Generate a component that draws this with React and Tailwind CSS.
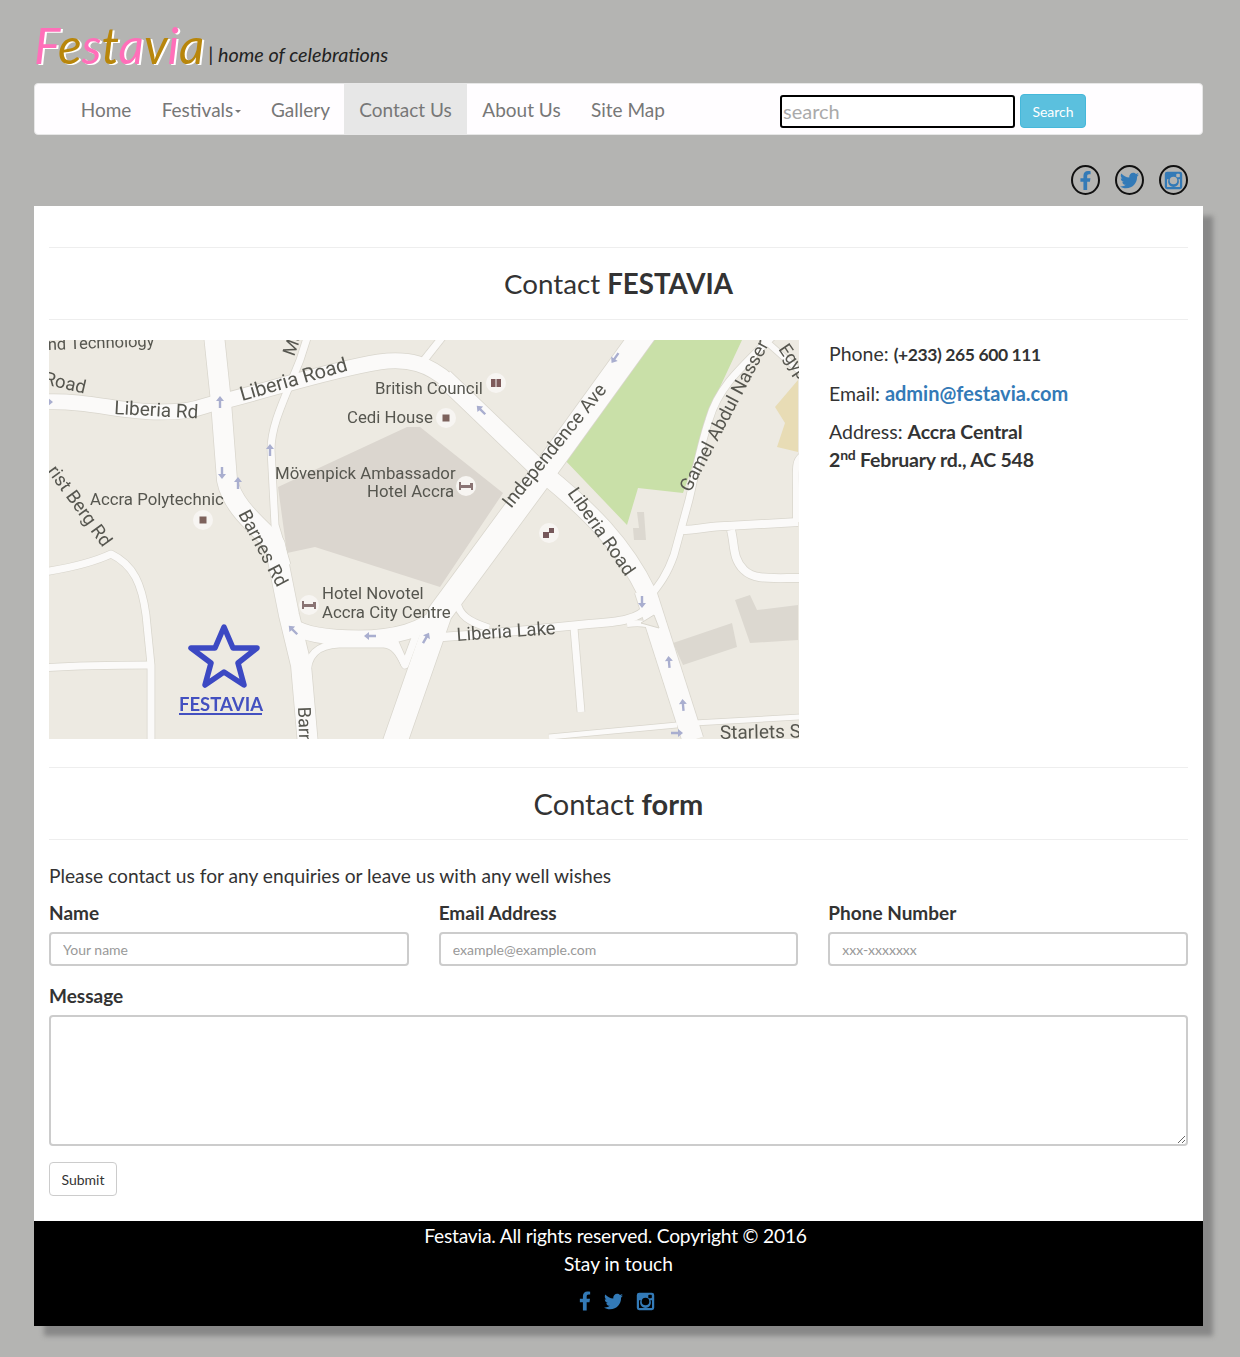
import React from 'react';
import { FaFacebookF, FaTwitter } from 'react-icons/fa';

function Insta({ className }) {
  return (
    <svg viewBox="0 0 24 24" className={className} fill="currentColor">
      <path fillRule="evenodd" d="M4 1h16a3 3 0 0 1 3 3v16a3 3 0 0 1-3 3H4a3 3 0 0 1-3-3V4a3 3 0 0 1 3-3Zm12.5 2.5a1 1 0 0 0-1 1v2.5a1 1 0 0 0 1 1H19a1 1 0 0 0 1-1V4.500a1 1 0 0 0-1-1h-2.500ZM12 7.200a4.800 4.800 0 1 0 0 9.600 4.800 4.800 0 0 0 0-9.600ZM3.800 10.500V19.500a.8.8 0 0 0 .8.8h14.800a.8.8 0 0 0 .8-.8v-9h-2a6.800 6.800 0 1 1-12.400 0h-2Z" />
    </svg>
  );
}

const roads = [
  ['M-5 62 C40 60 70 72 110 72 S150 66 171 62 C220 50 280 30 330 22 C360 18 380 24 400 42', 15],
  ['M395 38 L494 133 C540 170 575 205 598 253', 18],
  ['M596 250 L644 400', 21],
  ['M165 -5 L172 62 L178 140 C184 170 215 190 226 205 L240 275 L252 325 L259 405', 20],
  ['M596 -8 L494 133 L391 273 L345 405', 24],
  ['M259 -5 L251 20 C235 60 222 85 222 110 L226 185 L238 225', 7],
  ['M395 -5 L372 24', 7],
  ['M242 285 C255 295 280 298 310 298 C345 298 375 290 391 273', 15],
  ['M258 405 L258 335 C258 315 268 305 290 304 L335 304 C345 305 350 312 356 325', 7],
  ['M345 300 L356 325 L372 282', 7],
  ['M376 298 C420 296 480 290 540 284 C570 282 590 280 601 265', 8],
  ['M408 262 C410 275 420 282 440 288', 7],
  ['M578 284 C595 282 610 285 618 295', 6],
  ['M525 288 L532 372', 7],
  ['M725 -5 C695 25 670 45 660 80 C650 110 645 140 640 160 L625 215 C618 235 610 245 602 255', 7],
  ['M632 190 C650 190 665 185 678 186 L749 182', 8],
  ['M682 190 C686 205 683 218 695 230 C705 240 720 238 752 238', 8],
  ['M754 115 C745 120 747 130 747 150 L747 182', 6],
  ['M710 -5 L755 35', 6],
  ['M645 383 L752 377', 5],
  ['M628 385 L500 397', 5],
  ['M-5 232 C20 228 45 222 62 214 C85 225 93 245 97 275 L102 325 L102 405', 7],
  ['M-5 328 C30 325 70 325 102 325', 7],
];

const arrows = [
  [-2, 62, 90], [171, 62, 0], [173, 133, 180], [189, 143, 0], [221, 110, 0], [244, 290, -45],
  [321, 296, -90], [377, 298, 30], [566, 18, 215], [432, 70, -45], [593, 262, 180], [620, 322, -5],
  [634, 365, -5], [628, 393, 90],
];

const pois = [[447, 43, 'book'], [397, 78, 'sq'], [417, 146, 'bed'], [154, 180, 'sq'], [260, 265, 'bed'], [500, 193, 'two']];

const labels = [
  ['nd Technology', -1, 10, -2, 16.5],
  ['Road', -6, 44, 13, 18.5],
  ['Liberia Rd', 65, 74, 3, 19],
  ['Liberia Road', 193, 61, -16, 20],
  ['British Council', 326, 54, 0, 16.8],
  ['Cedi House', 298, 83, 0, 16.8],
  ['Mövenpick Ambassador', 226, 139, 0, 16.8],
  ['Hotel Accra', 318, 157, 0, 16.8],
  ['Accra Polytechnic', 41, 165, 0, 16.8],
  ['rist Berg Rd', -2, 131, 54, 18.5],
  ['Barnes Rd', 189, 174, 62, 18.5],
  ['Hotel Novotel', 273, 259, 0, 16.8],
  ['Accra City Centre', 273, 278, 0, 16.8],
  ['Liberia Lake', 408, 301, -4, 18.5],
  ['Independence Ave', 462, 169, -51, 18.8],
  ['Liberia Road', 518, 153, 55, 18.5],
  ['Gamel Abdul Nasser', 641, 153, -62, 18.5],
  ['Egypt', 729, 9, 56, 18],
  ['Starlets S', 671, 399, -1, 19],
  ['Barnes', 249, 367, 88, 18],
  ['Ma', 245, 17, -70, 18],
];

function Poi({ x, y, kind }) {
  return (
    <g>
      <circle cx={x} cy={y} r="10" fill="#f7f5f2" />
      {kind === 'sq' && <rect x={x - 3.500} y={y - 3.500} width="7" height="7" fill="#7d625c" />}
      {kind === 'book' && (
        <g fill="#7d5a5a">
          <rect x={x - 5} y={y - 4} width="4.500" height="8" />
          <rect x={x + 0.500} y={y - 4} width="4.500" height="8" />
        </g>
      )}
      {kind === 'bed' && (
        <path d={`M${x - 7} ${y - 4}h2v3h9v-2h3v7h-2v-2h-10v2h-2Z`} fill="#8a7474" />
      )}
      {kind === 'two' && (
        <g fill="#75585a">
          <rect x={x - 6} y={y - 1} width="6" height="6" />
          <rect x={x} y={y - 5} width="5" height="5" />
        </g>
      )}
    </g>
  );
}

function MapArt() {
  return (
    <svg viewBox="0 0 750 399" className="block h-[399px] w-[750px] shrink-0 blur-[0.4px]" fontFamily="Roboto, sans-serif">
      <rect width="750" height="399" fill="#edeae2" />
      <polygon points="229,147 358,87 371,87 454,153 391,247 266,207 238,213" fill="#dbd6cf" />
      <polygon points="601,0 693,0 671,47 634,153 589,148 578,185 514,118" fill="#c9e0a8" />
      <polygon points="749,40 726,67 736,83 728,107 749,112" fill="#e8dcb5" />
      <polygon points="624,303 683,283 688,307 634,325" fill="#dcd8d0" />
      <polygon points="686,260 701,255 708,270 749,265 749,300 701,303" fill="#dcd8d0" />
      <polygon points="588,172 595,172 597,200 585,200 584,188 590,188" fill="#dcd8d0" />
      {roads.map(([d, w], i) => (
        <path key={`c${i}`} d={d} fill="none" stroke="#d9d6cd" strokeWidth={w + 1.5} strokeLinejoin="round" />
      ))}
      {roads.map(([d, w], i) => (
        <path key={`r${i}`} d={d} fill="none" stroke="#fbfaf9" strokeWidth={w} strokeLinejoin="round" />
      ))}
      <polygon points="592,283 605,275 610,288" fill="#edeae2" stroke="#d9d6cd" />
      {arrows.map(([x, y, r], i) => (
        <path key={`a${i}`} transform={`translate(${x} ${y}) rotate(${r})`} d="M0 -6 L4 -1 L1.200 -1 L1.200 6 L-1.200 6 L-1.200 -1 L-4 -1 Z" fill="#a9aecf" />
      ))}
      {pois.map(([x, y, k], i) => (
        <Poi key={`p${i}`} x={x} y={y} kind={k} />
      ))}
      {labels.map(([t, x, y, r, s], i) => (
        <text key={`l${i}`} transform={`translate(${x} ${y}) rotate(${r})`} fontSize={s} fill="#56564f">{t}</text>
      ))}
      <path d="M175 287 L184 308 L208 308 L189 323 L195 345 L175 332 L156 345 L162 323 L142 308 L166 308 Z" fill="none" stroke="#3c49c3" strokeWidth="5.500" strokeLinejoin="round" />
      <text x="130" y="371" fontFamily="Lato, sans-serif" fontSize="18.500" fontWeight="700" fill="#4350c0">FESTAVIA</text>
      <rect x="130" y="373" width="83" height="2" fill="#4350c0" />
    </svg>
  );
}

function Social({ children }) {
  return (
    <div className="flex h-[30px] w-[29px] items-center justify-center rounded-[50%] border-2 border-[#111] text-[#337ab7]">
      {children}
    </div>
  );
}

const logo = [['F', '#ff6fb9'], ['e', '#b8860b'], ['s', '#ff6fb9'], ['t', '#b8860b'], ['a', '#ff6fb9'], ['v', '#b8860b'], ['i', '#ff6fb9'], ['a', '#b8860b']];

const navItems = [
  ['Home', 'w-[80px]', false],
  ['Festivals', 'w-[111px]', false],
  ['Gallery', 'w-[87px]', false],
  ['Contact Us', 'w-[123px]', true],
  ['About Us', 'w-[109px]', false],
  ['Site Map', 'w-[104px]', false],
];

function Field({ label, placeholder }) {
  return (
    <div>
      <div className="h-[25px] text-[19px] font-bold leading-[23px] text-[#333]">{label}</div>
      <input
        placeholder={placeholder}
        className="mt-[6px] block h-[34px] w-full rounded-[4px] border-2 border-[#ccc] bg-white px-[12px] text-[14px] placeholder:text-[#999]"
      />
    </div>
  );
}

function Heading({ light, bold, size }) {
  return (
    <div className={`border-y border-[#eee] py-[15px] text-center leading-[41px] text-[#333] ${size}`}>
      {light} <b className="font-bold">{bold}</b>
    </div>
  );
}

export default function App() {
  return (
    <div className="min-h-[1357px] bg-[#b4b4b2] pb-[31px] pl-[34px] pr-[37px] pt-[20px] font-['Lato',sans-serif]">
      <div className="flex h-[50px] items-end">
        <div className="text-[49.500px] italic leading-[50px] [text-shadow:2px_1px_0_#fff]">
          {logo.map(([c, col], i) => (
            <span key={i} style={{ color: col }}>{c}</span>
          ))}
        </div>
        <div className="mb-[2px] ml-[4px] text-[19.800px] italic leading-[28px] text-[#222]">
          | <span>home of celebrations</span>
        </div>
      </div>

      <nav className="mt-[13px] flex h-[52px] items-stretch rounded-[4px] border border-[#e7e7e7] bg-[#fffdff] pl-[31px]">
        {navItems.map(([t, w, active]) => (
          <div key={t} className={`flex items-center justify-center pt-[2px] text-[19px] text-[#777] ${w} ${active ? 'bg-[#e7e7e7] text-[#555]' : ''}`}>
            {t}
            {t === 'Festivals' && <span className="ml-[2px] mt-[3px] h-0 w-0 border-x-[3px] border-t-[3px] border-x-transparent border-t-[#777]" />}
          </div>
        ))}
        <div className="ml-[100px] flex items-center gap-[5px] pt-[4px]">
          <input
            placeholder="search"
            className="h-[33px] w-[235px] rounded-[3px] border-2 border-black bg-white px-[1px] text-[20px] placeholder:text-[#aaa]"
          />
          <button className="h-[34px] w-[66px] rounded-[4px] border border-[#46b8da] bg-[#5bc0de] text-[14px] text-white">Search</button>
        </div>
      </nav>

      <div className="mt-[30px] flex justify-end gap-[15px] pr-[15px]">
        <Social><FaFacebookF className="h-[19px] w-[13px]" /></Social>
        <Social><FaTwitter className="h-[19px] w-[19px]" /></Social>
        <Social><Insta className="h-[19px] w-[19px]" /></Social>
      </div>

      <div className="mt-[11px] shadow-[10px_10px_5px_#888]">
        <main className="h-[1015px] bg-white px-[15px] pt-[41px]">
          <Heading light="Contact" bold="FESTAVIA" size="text-[27.700px]" />
          <div className="mt-[20px] flex gap-[30px]">
            <MapArt />
            <div className="w-[359px] text-[19.500px] text-[#333]">
              <p className="h-[28px] leading-[28px]">Phone: <b className="text-[17.500px] tracking-[-0.400px]">(+233) 265 600 111</b></p>
              <p className="mt-[11px] h-[28px] leading-[28px]">Email: <b className="text-[20px] text-[#337ab7]">admin@festavia.com</b></p>
              <p className="mt-[11px] leading-[28px]">
                Address: <b className="tracking-[-0.150px]">Accra Central</b><br />
                <b className="tracking-[-0.200px]">2<sup className="text-[14px]">nd</sup> February rd., AC 548</b>
              </p>
            </div>
          </div>
          <div className="mt-[28px]">
            <Heading light="Contact" bold="form" size="text-[29px]" />
          </div>
          <p className="mt-[22px] h-[28px] text-[19.200px] leading-[28px] text-[#333]">Please contact us for any enquiries or leave us with any well wishes</p>
          <div className="mt-[11px] grid grid-cols-3 gap-[30px]">
            <Field label="Name" placeholder="Your name" />
            <Field label="Email Address" placeholder="example@example.com" />
            <Field label="Phone Number" placeholder="xxx-xxxxxxx" />
          </div>
          <div className="mt-[18px] h-[25px] text-[19px] font-bold leading-[23px] text-[#333]">Message</div>
          <textarea className="mt-[6px] block h-[131px] w-full rounded-[4px] border-2 border-[#ccc] bg-white" />
          <button className="mt-[16px] block h-[34px] w-[68px] rounded-[4px] border border-[#ccc] bg-white text-[14px] text-[#333]">Submit</button>
        </main>
        <footer className="h-[105px] bg-black pt-px text-center text-[19.200px] leading-[28px] text-white">
          <div className="pr-[6px] tracking-[-0.200px]">Festavia. All rights reserved. Copyright © 2016</div>
          <div>Stay in touch</div>
          <div className="mt-[13px] flex items-center justify-center gap-[13px] pr-[3px] text-[#337ab7]">
            <FaFacebookF className="h-[20px] w-[12px]" />
            <FaTwitter className="h-[19px] w-[19px]" />
            <Insta className="h-[19px] w-[19px]" />
          </div>
        </footer>
      </div>
    </div>
  );
}
